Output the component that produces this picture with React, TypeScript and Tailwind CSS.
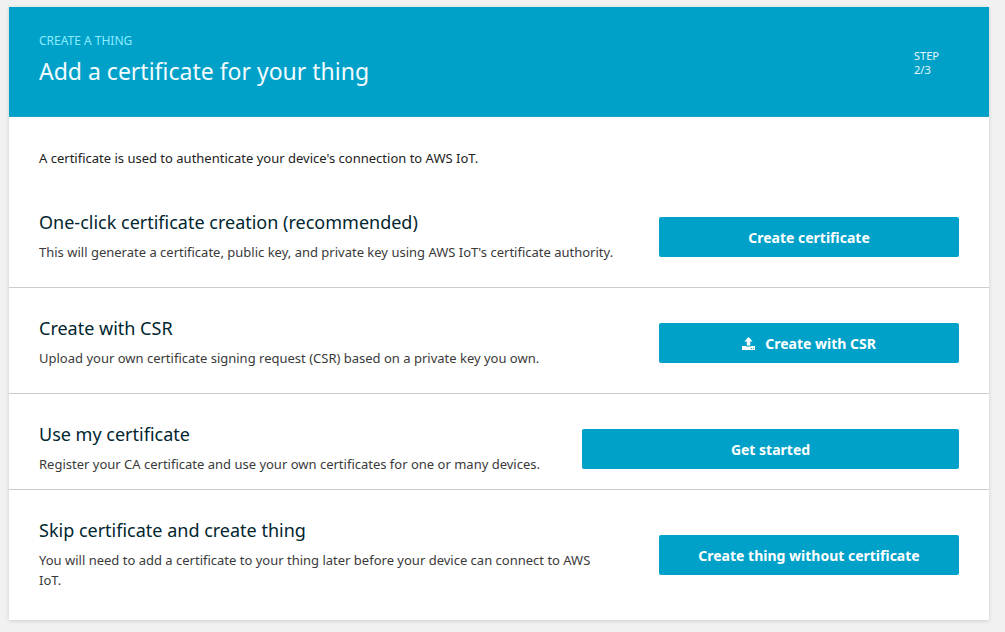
import type { ReactNode } from "react";
import clsx from "clsx";

type Option = {
  title: string;
  description: string;
  action: string;
  icon?: ReactNode;
  rowClass: string;
  textClass?: string;
  buttonClass: string;
};

function UploadIcon() {
  return (
    <svg className="mr-2.5 size-[13px]" viewBox="0 0 13 13" fill="currentColor" aria-hidden="true">
      <path d="M6.5 0 L10.6 4.4 H8.2 V8.4 H4.8 V4.4 H2.4 Z" />
      <path fillRule="evenodd" d="M0 9 H4 V9.6 H9 V9 H13 V13 H0 Z M9 11 V12 H10 V11 Z M11 11 V12 H12 V11 Z" />
    </svg>
  );
}

const options: Option[] = [
  {
    title: "One-click certificate creation (recommended)",
    description:
      "This will generate a certificate, public key, and private key using AWS IoT's certificate authority.",
    action: "Create certificate",
    rowClass: "border-b pb-[25px]",
    buttonClass: "w-[300px]",
  },
  {
    title: "Create with CSR",
    description: "Upload your own certificate signing request (CSR) based on a private key you own.",
    action: "Create with CSR",
    icon: <UploadIcon />,
    rowClass: "border-b pb-[25px]",
    buttonClass: "w-[300px]",
  },
  {
    title: "Use my certificate",
    description: "Register your CA certificate and use your own certificates for one or many devices.",
    action: "Get started",
    rowClass: "border-b pb-[15px]",
    buttonClass: "w-[377px]",
  },
  {
    title: "Skip certificate and create thing",
    description:
      "You will need to add a certificate to your thing later before your device can connect to AWS IoT.",
    action: "Create thing without certificate",
    rowClass: "pb-[30px]",
    textClass: "max-w-[570px]",
    buttonClass: "w-[300px]",
  },
];

function OptionRow({ option }: { option: Option }) {
  return (
    <section
      className={clsx(
        "flex items-center justify-between gap-[30px] border-[#ccc] px-[30px] pt-[30px]",
        option.rowClass,
      )}
    >
      <div className={clsx("min-w-0 flex-1", option.textClass)}>
        <h2 className="mb-[10px] text-[18px] leading-5 text-[#00262f]">{option.title}</h2>
        <p className="text-[13px] leading-5 text-[#3a3a3a]">{option.description}</p>
      </div>
      <button
        type="button"
        className={clsx(
          "flex h-10 shrink-0 items-center justify-center rounded-[2px] bg-[#00a1c9] text-[14px] font-bold text-white",
          option.buttonClass,
        )}
      >
        {option.icon}
        {option.action}
      </button>
    </section>
  );
}

export default function App() {
  return (
    <div className="min-h-screen bg-[#f1f1f1] pt-[7px] pr-4 pb-3 pl-[9px] font-['Noto_Sans','Open_Sans',sans-serif]">
      <main className="bg-white shadow-[0_1px_4px_rgba(0,0,0,0.15)]">
        <header className="flex items-center justify-between border-b border-[#1ba2c5] bg-[#00a1c9] pt-6 pr-[50px] pb-[25px] pl-[30px]">
          <div>
            <p className="text-[12px] leading-5 text-[#8cecff]">CREATE A THING</p>
            <h1 className="text-[23px] leading-10 text-[#f2fbfd]">Add a certificate for your thing</h1>
          </div>
          <p className="pt-1 text-[11px] leading-[14px] text-[#e6f8fc]">
            STEP
            <br />
            2/3
          </p>
        </header>
        <p className="px-[30px] pt-[31px] pb-[14px] text-[13px] leading-5 text-[#222]">
          A certificate is used to authenticate your device's connection to AWS IoT.
        </p>
        {options.map((option) => (
          <OptionRow key={option.title} option={option} />
        ))}
      </main>
    </div>
  );
}
